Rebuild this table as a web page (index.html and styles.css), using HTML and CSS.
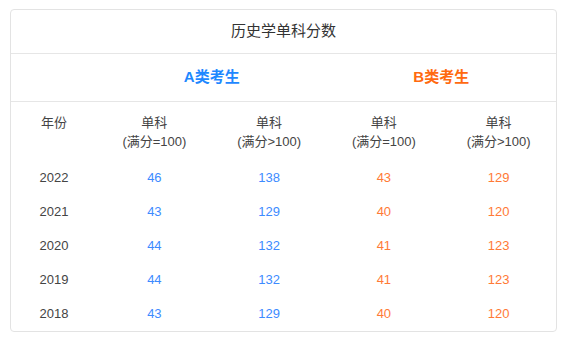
FILE: index.html
```html
<!DOCTYPE html>
<html lang="zh">
<head>
<meta charset="utf-8">
<link rel="stylesheet" href="styles.css">
</head>
<body>
<div class="card">
  <div class="title">历史学单科分数</div>
  <div class="groups">
    <div></div>
    <div class="group a">A类考生</div>
    <div class="group b">B类考生</div>
  </div>
  <div class="row head">
    <div>年份</div>
    <div>单科<br>(满分=100)</div>
    <div>单科<br>(满分&gt;100)</div>
    <div>单科<br>(满分=100)</div>
    <div>单科<br>(满分&gt;100)</div>
  </div>
  <div class="row"><div class="yr">2022</div><div class="a">46</div><div class="a">138</div><div class="b">43</div><div class="b">129</div></div>
  <div class="row"><div class="yr">2021</div><div class="a">43</div><div class="a">129</div><div class="b">40</div><div class="b">120</div></div>
  <div class="row"><div class="yr">2020</div><div class="a">44</div><div class="a">132</div><div class="b">41</div><div class="b">123</div></div>
  <div class="row"><div class="yr">2019</div><div class="a">44</div><div class="a">132</div><div class="b">41</div><div class="b">123</div></div>
  <div class="row"><div class="yr">2018</div><div class="a">43</div><div class="a">129</div><div class="b">40</div><div class="b">120</div></div>
</div>
</body>
</html>
```
FILE: styles.css
```css
html, body {
  margin: 0;
  padding: 0;
  background: #fff;
}
body {
  padding: 9px 0 0 10px;
  font-family: "Liberation Sans", "Noto Sans CJK SC", sans-serif;
  color: #333;
}
.card {
  width: 547px;
  height: 323px;
  box-sizing: border-box;
  border: 1px solid #e3e3e3;
  border-radius: 4px;
  overflow: hidden;
}
.title {
  height: 43px;
  line-height: 41px;
  text-align: center;
  font-size: 15px;
  color: #333;
  border-bottom: 1px solid #e6e6e6;
}
.groups {
  display: grid;
  grid-template-columns: 86px 1fr 1fr;
  height: 47px;
  line-height: 45px;
  border-bottom: 1px solid #e6e6e6;
}
.group {
  text-align: center;
  font-size: 15px;
  font-weight: bold;
}
.groups .a { color: #1e88ff; }
.groups .b { color: #ff6a10; }
.row {
  display: grid;
  grid-template-columns: 86px repeat(4, 1fr);
  height: 34px;
  line-height: 34px;
  text-align: center;
  font-size: 13px;
}
.row.head {
  height: 59px;
  line-height: 19px;
  padding-top: 11px;
  box-sizing: border-box;
  color: #444;
}
.yr { color: #444; }
.row .a { color: #3d8bff; }
.row .b { color: #ff7a36; }
```
